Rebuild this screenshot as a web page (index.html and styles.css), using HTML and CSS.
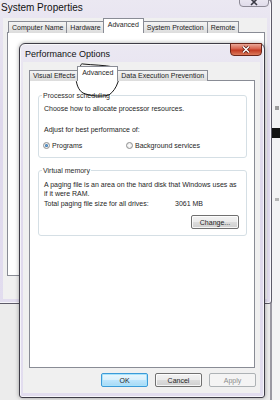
FILE: index.html
```html
<!DOCTYPE html>
<html lang="en">
<head>
  <meta charset="UTF-8">
  <title>Performance Options</title>
  <link rel="stylesheet" href="styles.css">
</head>
<body>

  <div class="behind">
    <span class="mark"></span>
    <span class="bar"></span>
    <span class="mark low"></span>
  </div>

  <div class="win sys">
    <div class="titlebar">
      <span class="title">System Properties</span>
      <span class="close">
        <svg width="10" height="8" viewBox="0 0 10 8"><path d="M2 1 L8 7 M8 1 L2 7" stroke="#3a3a44" stroke-width="1.6" fill="none"/></svg>
      </span>
    </div>
    <div class="client">
      <div class="tabs">
        <span class="tab">Computer Name</span>
        <span class="tab">Hardware</span>
        <span class="tab active">Advanced</span>
        <span class="tab">System Protection</span>
        <span class="tab">Remote</span>
      </div>
      <div class="panel"></div>
    </div>
  </div>

  <div class="win perf">
    <div class="titlebar">
      <span class="title">Performance Options</span>
      <span class="close">
        <svg width="12" height="9" viewBox="0 0 12 9">
          <path d="M3 1.5 L9 7.5 M9 1.5 L3 7.5" stroke="#5a1a10" stroke-width="3" fill="none"/>
          <path d="M3 1.5 L9 7.5 M9 1.5 L3 7.5" stroke="#ffffff" stroke-width="1.5" fill="none"/>
        </svg>
      </span>
    </div>
    <div class="client">
      <div class="tabs">
        <span class="tab">Visual Effects</span>
        <span class="tab active">Advanced</span>
        <span class="tab">Data Execution Prevention</span>
      </div>
      <div class="panel">

        <fieldset class="group first">
          <legend>Processor scheduling</legend>
          <p>Choose how to allocate processor resources.</p>
          <p class="adjust">Adjust for best performance of:</p>
          <div class="radios">
            <label class="opt"><span class="radio checked"></span>Programs</label>
            <label class="opt"><span class="radio"></span>Background services</label>
          </div>
        </fieldset>

        <fieldset class="group second">
          <legend>Virtual memory</legend>
          <p>A paging file is an area on the hard disk that Windows uses as<br>if it were RAM.</p>
          <div class="total">
            <span class="total-label">Total paging file size for all drives:</span>
            <span>3061 MB</span>
          </div>
          <div class="change-row">
            <button class="btn">Change...</button>
          </div>
        </fieldset>

      </div>
      <div class="buttons">
        <button class="btn default">OK</button>
        <button class="btn">Cancel</button>
        <button class="btn" disabled>Apply</button>
      </div>
    </div>
  </div>

  <!-- pen mark drawn round the Advanced tab -->
  <svg class="scribble" width="280" height="400" viewBox="0 0 280 400">
    <path d="M80 70 C80 66, 81 63, 83 64 C92 65, 104 65, 114 67 C119 69, 120 76, 118 82 C116 88, 113 92, 109 95 C101 97, 90 96, 83 93 C78 90, 76 83, 76 77 C76 73, 78 69, 81 66"
          stroke="#1a1a1a" stroke-width="1" fill="none"/>
  </svg>

</body>
</html>
```

FILE: styles.css
```css
* {
  box-sizing: border-box;
}
body {
  margin: 0;
  width: 280px;
  height: 400px;
  overflow: hidden;
  position: relative;
  background: #ececec;
  font-family: "Liberation Sans", Arial, sans-serif;
  font-size: 7px;
  color: #1e1e1e;
}

/* window behind, at the right edge */
.behind {
  position: absolute;
  left: 270px;
  top: 0;
  width: 10px;
  height: 400px;
  background: #f3f3f4;
  border-left: 2px solid #9a98a2;
  display: flex;
  flex-direction: column;
}
.behind .mark {
  margin: 106px 0 0 3px;
  width: 4px;
  height: 4px;
  background: #9c9c9c;
}
.behind .mark.low {
  margin-top: 60px;
  height: 3px;
  background: #b5b5b5;
}
.behind .bar {
  margin-top: 18px;
  height: 10px;
  background: #141414;
}

/* windows */
.win {
  position: absolute;
  display: flex;
  flex-direction: column;
  border: 1px solid #5d5b68;
  border-radius: 6px 6px 3px 3px;
  background: linear-gradient(#ebe8f2, #ded8ec 40%, #e2ddef);
  box-shadow: inset 0 0 0 1px rgba(255,255,255,0.7);
}
.sys {
  left: -3px;
  top: -2px;
  width: 275px;
  height: 306px;
  padding: 0 4px 4px 5px;
}
.perf {
  left: 19px;
  top: 43px;
  width: 246px;
  height: 355px;
  padding: 0 4px 4px 3px;
  border-color: #3e3c47;
  box-shadow: inset 0 0 0 1px rgba(255,255,255,0.7), 0 0 4px rgba(0,0,0,0.35);
}
.titlebar {
  display: flex;
  align-items: flex-start;
  flex-shrink: 0;
}
.sys .titlebar {
  height: 19px;
}
.perf .titlebar {
  height: 18px;
}
.title {
  color: #111;
  align-self: center;
}
.sys .title {
  font-size: 10px;
  margin-left: -2px;
  margin-top: -2px;
}
.perf .title {
  font-size: 9px;
  margin-left: 2px;
  margin-top: 2px;
}
.close {
  margin-left: auto;
  display: flex;
  align-items: center;
  justify-content: center;
  border-radius: 0 0 4px 4px;
}
.sys .close {
  width: 30px;
  height: 13px;
  margin-top: -5px;
  margin-right: -2px;
  padding-top: 3px;
  border: 1px solid #8d8a96;
  background: linear-gradient(#f0eef5, #e0dcea);
}
.perf .close {
  width: 32px;
  height: 13px;
  margin-top: -1px;
  margin-right: -2px;
  border: 1px solid #6b2519;
  background: linear-gradient(#eaa898, #d6604a 45%, #c23a22 55%, #dc7a5c);
}

.client {
  flex: 1;
  display: flex;
  flex-direction: column;
  background: #f0f0f0;
}
.sys .client {
  padding: 0 2px 0 4px;
}
.perf .client {
  padding: 4px 5px 6px 6px;
}

/* tabs */
.tabs {
  display: flex;
  align-items: flex-end;
  flex-shrink: 0;
  position: relative;
  z-index: 1;
  margin-bottom: -1px;
}
.tab {
  border: 1px solid #898c95;
  border-bottom: none;
  margin-right: -1px;
  background: linear-gradient(#f4f4f4, #e8e8e8 50%, #dcdcdc);
  white-space: nowrap;
}
.sys .tab {
  height: 12px;
  line-height: 11px;
  padding: 0 3px;
  font-size: 7px;
}
.sys .tab:first-child {
  margin-left: 1px;
}
.perf .tab {
  height: 11px;
  line-height: 10px;
  padding: 0 3px;
}
.tab.active {
  background: #fff;
  position: relative;
  z-index: 2;
  margin: 0 -1px 0 -1px;
}
.sys .tab.active {
  height: 15px;
  line-height: 12px;
  padding: 0 4px;
}
.perf .tab.active {
  height: 15px;
  line-height: 11px;
  padding: 0 4px;
}

.panel {
  background: #fff;
  border: 1px solid #898c95;
}
.sys .panel {
  height: 244px;
}
.perf .panel {
  flex: 1;
  padding: 10px 7px 0 8px;
}

/* group boxes */
.group {
  margin: 0;
  border: 1px solid #d5dfe5;
  border-radius: 3px;
  padding: 4px 7px 7px 5px;
}
.group.second {
  margin-top: 8px;
  padding-top: 5px;
  padding-bottom: 6px;
}
.group legend {
  padding: 0 1px;
  margin-left: -2px;
  line-height: 9px;
  color: #2c2c2c;
}
.group p {
  margin: 0;
  line-height: 9px;
}
.group .adjust {
  margin-top: 12px;
}
.radios {
  display: flex;
  margin-top: 7px;
  margin-left: -1px;
  line-height: 9px;
}
.opt {
  display: flex;
  align-items: center;
  gap: 2px;
}
.opt:first-child {
  width: 83px;
}
.radio {
  width: 7px;
  height: 7px;
  border-radius: 50%;
  border: 1px solid #8e8f8f;
  background: radial-gradient(#ffffff, #e3e3e3);
  display: flex;
  align-items: center;
  justify-content: center;
}
.radio.checked::after {
  content: "";
  width: 3px;
  height: 3px;
  border-radius: 50%;
  background: radial-gradient(#5fa3e0, #1c5180);
}
.total {
  display: flex;
  margin-top: 1px;
  line-height: 9px;
}
.total-label {
  width: 131px;
}
.change-row {
  display: flex;
  justify-content: flex-end;
  margin-top: 7px;
}

/* buttons */
.btn {
  width: 47px;
  height: 14px;
  padding: 0;
  font-family: inherit;
  font-size: 7px;
  color: #1e1e1e;
  border: 1px solid #707070;
  border-radius: 2px;
  background: linear-gradient(#f2f2f2, #ebebeb 50%, #dddddd 50%, #cfcfcf);
  box-shadow: inset 0 0 0 1px rgba(255,255,255,0.8);
}
.change-row .btn {
  width: 48px;
}
.btn.default {
  border-color: #3c9ad8;
  background: linear-gradient(#eaf6fd, #d9f0fc 50%, #bee6fd 50%, #a7d9f5);
  box-shadow: inset 0 0 0 1px #a9e3fb;
}
.btn:disabled {
  color: #8d8d8d;
  border-color: #adb2b5;
  background: #f4f4f4;
  box-shadow: none;
}
.buttons {
  display: flex;
  justify-content: flex-end;
  gap: 7px;
  margin-top: 5px;
  margin-right: -1px;
  flex-shrink: 0;
}

/* pen circle over the Advanced tab */
.scribble {
  position: absolute;
  left: 0;
  top: 0;
  pointer-events: none;
}
```
